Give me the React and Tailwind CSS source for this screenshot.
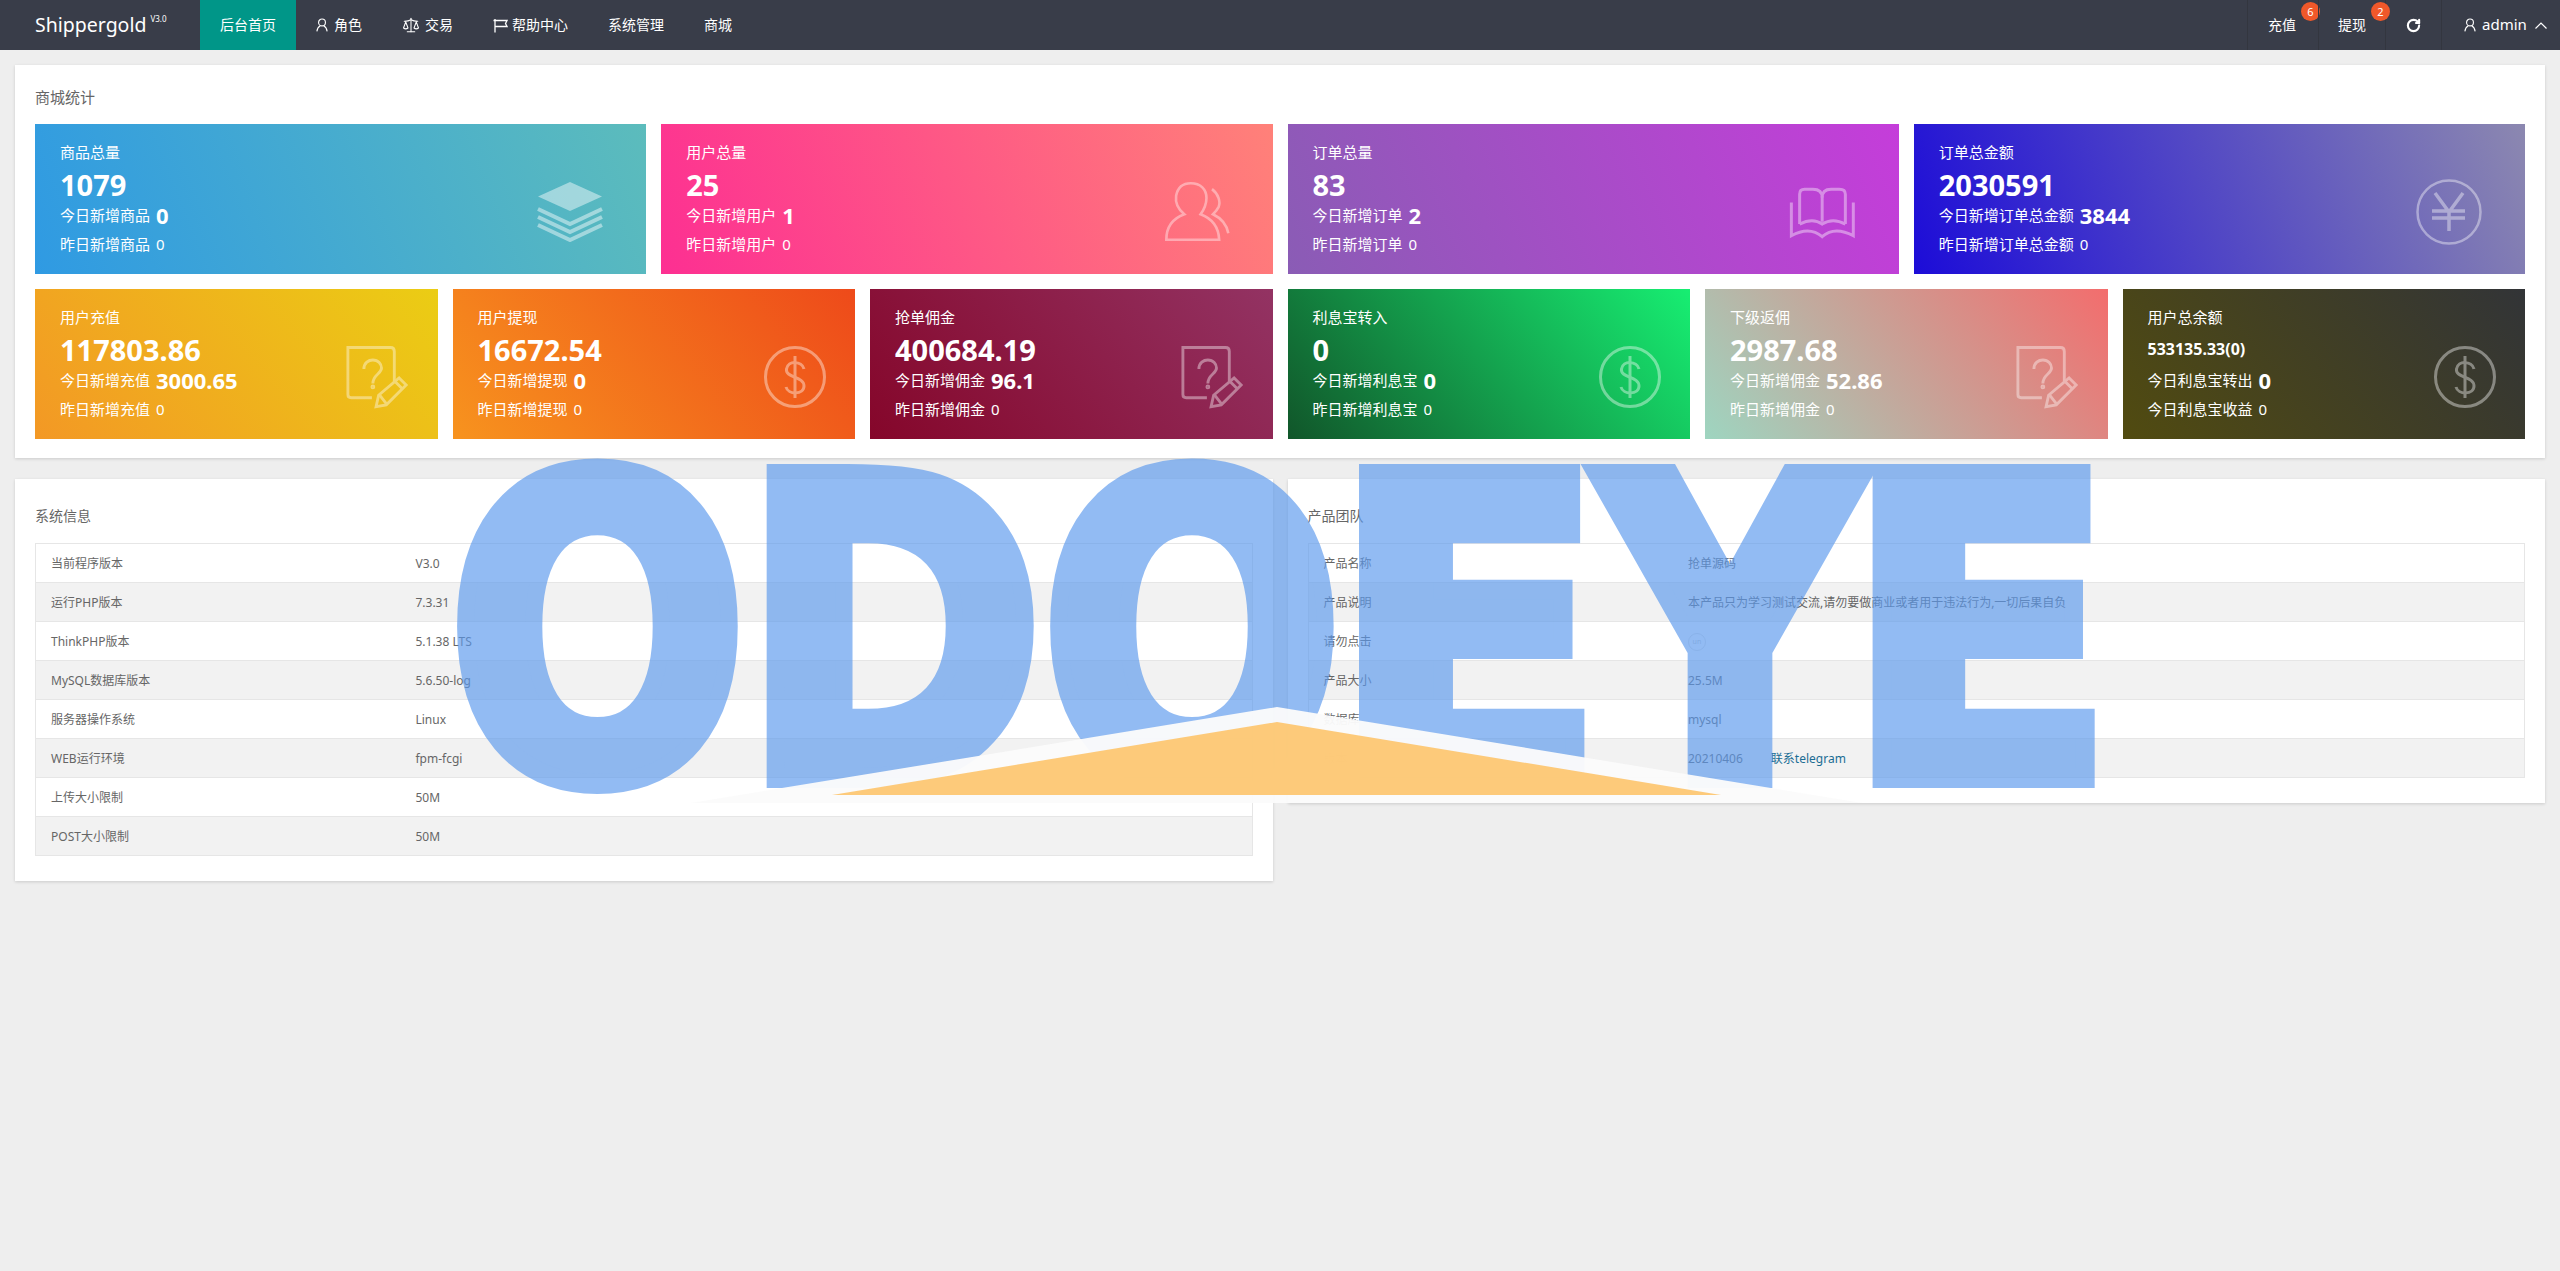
import React from 'react';
import { Scale, RotateCw } from 'lucide-react';

const LayersIcon = () => (
  <svg viewBox="0 0 66 60" className="w-[66px] h-[60px] text-white opacity-45" fill="none" stroke="currentColor">
    <polygon points="33,0 65,22 33,44 1,22" transform="scale(1,0.66)" fill="currentColor" stroke="none" />
    <polyline points="1,27 33,42 65,27" strokeWidth="4" />
    <polyline points="1,35 33,50 65,35" strokeWidth="4" />
    <polyline points="1,43 33,58 65,43" strokeWidth="4" />
  </svg>
);

const UsersIcon = () => (
  <svg viewBox="38 20 202 190" className="w-[66px] h-[62px] text-white opacity-40" fill="none" stroke="currentColor" strokeWidth="8">
    <path d="M45 200C45 160 65 135 100 122C80 105 72 85 75 65C80 40 95 27 120 27C150 27 168 45 168 72C168 92 160 108 150 122C185 135 205 160 207 200Z" />
    <path d="M185 45C205 60 212 85 205 100C200 110 195 115 188 122C215 135 230 155 235 180" />
  </svg>
);

const BookIcon = () => (
  <svg viewBox="55 50 205 160" className="w-[68px] h-[53px] text-white opacity-40" fill="none" stroke="currentColor" strokeWidth="9">
    <path d="M90 165V75Q90 60 105 60H130Q158 60 158 85V158" />
    <path d="M158 85Q158 60 185 60H210Q228 60 228 75V165" />
    <path d="M90 165Q130 145 158 165Q190 145 228 165" />
    <path d="M65 100V200Q120 170 158 203Q195 170 252 200V100" />
  </svg>
);

const YenIcon = () => (
  <svg viewBox="0 0 66 66" className="w-[66px] h-[66px] text-white opacity-40" fill="none" stroke="currentColor">
    <circle cx="33" cy="33" r="31.5" strokeWidth="2.5" />
    <path d="M19 14L33 33L47 14M33 33V52M16 32H49M16 39H49" strokeWidth="3.5" />
  </svg>
);

const NoteIcon = () => (
  <svg viewBox="45 25 195 200" className="w-[63px] h-[64px] text-white opacity-40" fill="none" stroke="currentColor" strokeWidth="9">
    <path d="M195 140V45Q195 33 183 33H50V180Q50 190 60 190H125" />
    <path d="M100 100C100 80 115 72 128 72C145 72 155 85 155 97C155 115 128 118 128 145" />
    <circle cx="128" cy="156" r="3" />
    <path d="M138 218L146 182L210 128L232 150L170 212Z" />
    <path d="M198 140L220 162M148 180L170 208" />
  </svg>
);

const DollarIcon = () => (
  <svg viewBox="0 0 62 62" className="w-[62px] h-[62px] text-white opacity-40" fill="none" stroke="currentColor" strokeWidth="3">
    <circle cx="31" cy="31" r="29.5" />
    <path d="M40 23C38 15 24 14 22.500 23C21 32 40 30 40 40C40 49 24 49 22 41" />
    <path d="M31 10V52" />
  </svg>
);

const NavUser = () => (
  <svg viewBox="0 0 14 16" className="w-[12px] h-[14px]" fill="none" stroke="currentColor" strokeWidth="1.3">
    <circle cx="7" cy="5" r="4" />
    <path d="M1 15.500C1.500 12 3.500 9.800 5 9M13 15.500C12.500 12 10.500 9.800 9 9" />
  </svg>
);

const NavFlag = () => (
  <svg viewBox="0 0 15 15" className="w-[15px] h-[15px]" fill="none" stroke="currentColor" strokeWidth="1.3">
    <path d="M2 1V14.500M0.500 2.500H14L12.500 5.500L14 8.500H2" />
  </svg>
);

const topCards = [
  { title: '商品总量', total: '1079', todayLabel: '今日新增商品', today: '0', lastLabel: '昨日新增商品', last: '0', icon: <LayersIcon />, bg: 'bg-[linear-gradient(68deg,#2f9ae3,#5cbcbc)]' },
  { title: '用户总量', total: '25', todayLabel: '今日新增用户', today: '1', lastLabel: '昨日新增用户', last: '0', icon: <UsersIcon />, bg: 'bg-[linear-gradient(68deg,#fd2f92,#ff8179)]' },
  { title: '订单总量', total: '83', todayLabel: '今日新增订单', today: '2', lastLabel: '昨日新增订单', last: '0', icon: <BookIcon />, bg: 'bg-[linear-gradient(68deg,#8a5cb5,#c53dda)]' },
  { title: '订单总金额', total: '2030591', todayLabel: '今日新增订单总金额', today: '3844', lastLabel: '昨日新增订单总金额', last: '0', icon: <YenIcon />, bg: 'bg-[linear-gradient(68deg,#1c0cd8,#8c88b0)]' },
];

const bottomCards = [
  { title: '用户充值', total: '117803.86', todayLabel: '今日新增充值', today: '3000.65', lastLabel: '昨日新增充值', last: '0', icon: <NoteIcon />, bg: 'bg-[linear-gradient(50deg,#f39825,#ebcd14)]' },
  { title: '用户提现', total: '16672.54', todayLabel: '今日新增提现', today: '0', lastLabel: '昨日新增提现', last: '0', icon: <DollarIcon />, bg: 'bg-[linear-gradient(50deg,#f7931e,#ee4a1a)]' },
  { title: '抢单佣金', total: '400684.19', todayLabel: '今日新增佣金', today: '96.1', lastLabel: '昨日新增佣金', last: '0', icon: <NoteIcon />, bg: 'bg-[linear-gradient(50deg,#85062a,#933363)]' },
  { title: '利息宝转入', total: '0', todayLabel: '今日新增利息宝', today: '0', lastLabel: '昨日新增利息宝', last: '0', icon: <DollarIcon />, bg: 'bg-[linear-gradient(50deg,#11562a,#17ee72)]' },
  { title: '下级返佣', total: '2987.68', todayLabel: '今日新增佣金', today: '52.86', lastLabel: '昨日新增佣金', last: '0', icon: <NoteIcon />, bg: 'bg-[linear-gradient(50deg,#9ed5c0,#f36d6d)]' },
  { title: '用户总余额', total: '533135.33(0)', small: true, todayLabel: '今日利息宝转出', today: '0', lastLabel: '今日利息宝收益', last: '0', icon: <DollarIcon />, bg: 'bg-[linear-gradient(50deg,#514b10,#323437)]' },
];

const systemRows = [
  ['当前程序版本', 'V3.0'],
  ['运行PHP版本', '7.3.31'],
  ['ThinkPHP版本', '5.1.38 LTS'],
  ['MySQL数据库版本', '5.6.50-log'],
  ['服务器操作系统', 'Linux'],
  ['WEB运行环境', 'fpm-fcgi'],
  ['上传大小限制', '50M'],
  ['POST大小限制', '50M'],
];

const productRows = [
  ['产品名称', '抢单源码'],
  ['产品说明', '本产品只为学习测试交流,请勿要做商业或者用于违法行为,一切后果自负'],
  ['请勿点击', <span key="c" className="flex w-[18px] h-[18px] items-center justify-center rounded-full border border-[#e4e4e4] text-[7px] text-[#cccccc]">un</span>],
  ['产品大小', '25.5M'],
  ['数据库', 'mysql'],
  ['版本', <span key="v">20210406<a className="ml-[28px] text-[#1b6d94]">联系telegram</a></span>],
];

const StatCard = ({ card, iconRight }) => (
  <div className={`flex justify-between h-[150px] pt-[18px] pl-[25px] text-white ${card.bg}`}>
    <div>
      <div className="h-5 text-[15px] leading-5">{card.title}</div>
      <div className={`h-[45px] leading-[45px] font-bold ${card.small ? 'text-[16px]' : 'text-[29px]'}`}>{card.total}</div>
      <div className="flex items-center h-4 text-[15px] whitespace-nowrap">
        {card.todayLabel}
        <span className="ml-[6px] text-[22px] font-bold">{card.today}</span>
      </div>
      <div className="mt-[11px] h-5 text-[15px] leading-5 whitespace-nowrap">
        {card.lastLabel}
        <span className="ml-[6px]">{card.last}</span>
      </div>
    </div>
    <div className={`self-center mt-2 ${iconRight}`}>{card.icon}</div>
  </div>
);

const InfoPanel = ({ title, rows }) => (
  <div className="bg-white px-5 pt-[27px] pb-[25px] shadow-[0_1px_3px_rgba(0,0,0,0.15)]">
    <div className="mb-[17px] text-sm leading-5 text-[#666666]">{title}</div>
    <table className="w-full table-fixed border-collapse text-xs text-[#666666]">
      <colgroup>
        <col className="w-[30%]" />
        <col />
      </colgroup>
      <tbody>
        {rows.map(([label, value], i) => (
          <tr key={label} className={`h-[39px] ${i % 2 === 1 ? 'bg-[#f2f2f2]' : 'bg-white'}`}>
            <td className="border border-r-0 border-[#e6e6e6] px-[15px] pt-[2px]">{label}</td>
            <td className="border border-l-0 border-[#e6e6e6] px-[15px] pt-[2px]">{value}</td>
          </tr>
        ))}
      </tbody>
    </table>
  </div>
);

// the blue logo that sits on top of the whole page
const Watermark = () => (
  <svg viewBox="0 0 2560 1271" className="absolute left-0 top-0 w-[2560px] h-[1271px] pointer-events-none">
    <g opacity="0.66" fill="#5b99ed" stroke="#5b99ed" strokeWidth="20" strokeLinejoin="miter" fontFamily="DejaVu Sans" fontWeight="700" fontSize="417">
      <text x="448" y="778" textLength="299" lengthAdjust="spacingAndGlyphs">O</text>
      <text x="742" y="778" textLength="302" lengthAdjust="spacingAndGlyphs">D</text>
      <text x="1041" y="778" textLength="302" lengthAdjust="spacingAndGlyphs">O</text>
      <text x="1332" y="778" textLength="272" lengthAdjust="spacingAndGlyphs">E</text>
      <text x="1600" y="778" textLength="260" lengthAdjust="spacingAndGlyphs">Y</text>
      <text x="1846" y="778" textLength="268" lengthAdjust="spacingAndGlyphs">E</text>
    </g>
    <polygon points="1277,707 1862,803 691,803" fill="#fbfbfb" fillOpacity="0.96" />
    <polygon points="1277,722 1721,795 832,795" fill="#fdc46c" fillOpacity="0.9" />
  </svg>
);

export default function App() {
  return (
    <div className="relative min-h-screen overflow-hidden bg-[#eeeeee] [font-family:'Noto_Sans','Noto_Sans_CJK_SC',sans-serif]">
      {/* Top nav */}
      <div className="flex h-[50px] items-center justify-between bg-[#393d49] text-sm text-white">
        <div className="flex h-full items-center">
          <div className="flex w-[200px] pl-[35px]">
            <span className="text-[19.500px] leading-[50px]">Shippergold</span>
            <span className="ml-[4px] mt-[14px] text-[8px] leading-[10px]">V3.0</span>
          </div>
          <a className="flex h-full items-center bg-[#009688] px-5">后台首页</a>
          <a className="flex h-full items-center gap-[6px] px-5"><NavUser />角色</a>
          <a className="flex h-full items-center gap-[5px] px-5"><Scale size={18} strokeWidth={1.4} />交易</a>
          <a className="flex h-full items-center gap-1 px-5"><NavFlag />帮助中心</a>
          <a className="flex h-full items-center px-5">系统管理</a>
          <a className="flex h-full items-center px-5">商城</a>
        </div>
        <div className="flex h-full items-center">
          <a className="relative flex h-full w-[71px] items-center border-l border-[#33363f] pl-5">
            充值
            <span className="absolute left-[53px] top-[2px] flex h-[19px] w-[19px] items-center justify-center rounded-full bg-[#f0582a] text-[11px]">6</span>
          </a>
          <a className="relative flex h-full w-[67px] items-center border-l border-[#33363f] pl-[19px]">
            提现
            <span className="absolute left-[52px] top-[2px] flex h-[19px] w-[19px] items-center justify-center rounded-full bg-[#f0582a] text-[11px]">2</span>
          </a>
          <a className="flex h-full w-[56px] items-center border-l border-[#33363f] pl-[20px]">
            <RotateCw size={15} strokeWidth={3.4} />
          </a>
          <a className="flex h-full w-[119px] items-center border-l border-[#33363f] pl-[22px]">
            <NavUser />
            <span className="ml-[6px] text-[15px]">admin</span>
            <svg viewBox="0 0 12 7" className="ml-[8px] h-[7px] w-3" fill="none" stroke="currentColor" strokeWidth="1.2">
              <path d="M0.500 6.500L6 1L11.500 6.500" />
            </svg>
          </a>
        </div>
      </div>

      <div className="px-[15px] pt-[15px]">
        {/* Shop stats */}
        <div className="bg-white px-5 pt-[22px] pb-[19px] shadow-[0_1px_3px_rgba(0,0,0,0.15)]">
          <div className="mb-[17px] text-[15px] leading-5 text-[#666666]">商城统计</div>
          <div className="grid grid-cols-4 gap-[15px]">
            {topCards.map((card) => (
              <StatCard key={card.title} card={card} iconRight="mr-[43px]" />
            ))}
          </div>
          <div className="mt-[15px] grid grid-cols-6 gap-[15px]">
            {bottomCards.map((card) => (
              <StatCard key={card.title} card={card} iconRight="mr-[29px]" />
            ))}
          </div>
        </div>

        {/* Info tables */}
        <div className="mt-[21px] grid grid-cols-2 items-start gap-[15px]">
          <InfoPanel title="系统信息" rows={systemRows} />
          <InfoPanel title="产品团队" rows={productRows} />
        </div>
      </div>

      <Watermark />
    </div>
  );
}
